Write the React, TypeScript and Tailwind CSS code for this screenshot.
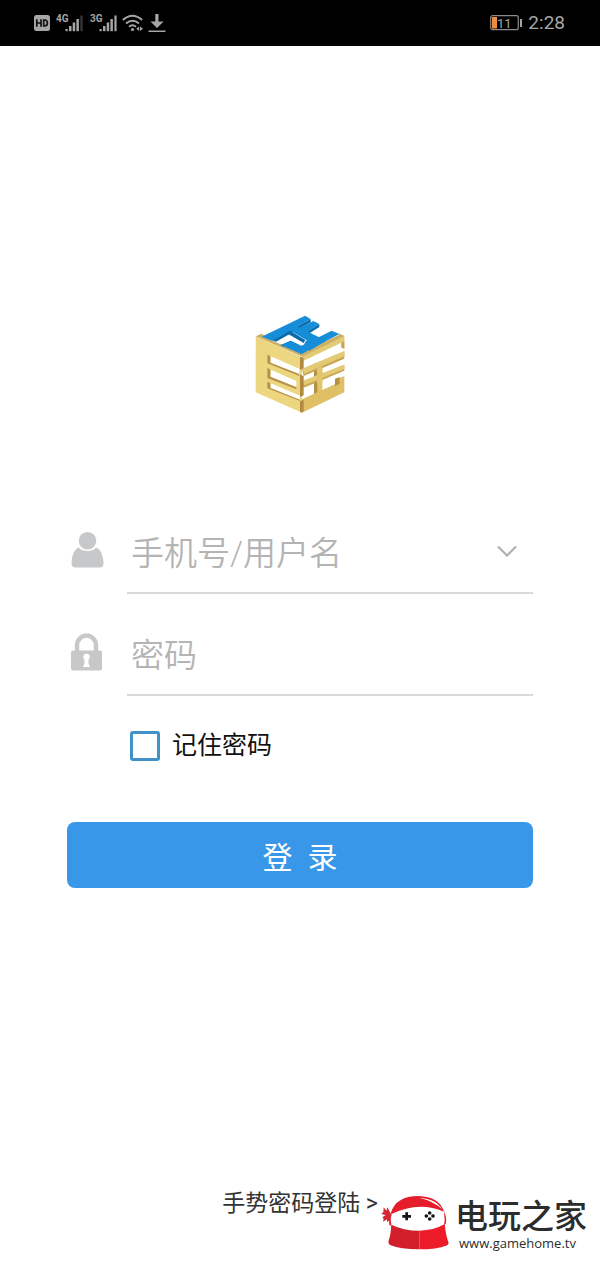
import { useState } from "react";
import type { ReactNode } from "react";

function SignalIcon({ label, dimLast }: { label: string; dimLast?: boolean }) {
  return (
    <svg className="h-5 w-7" viewBox="0 0 28 20" fill="#a6a6a6" aria-label={`${label} signal`}>
      <text x="0" y="9" fontSize="10" fontWeight="700" fontFamily="Roboto, sans-serif">
        {label}
      </text>
      <rect x="9.5" y="16" width="2.2" height="2.2" />
      <rect x="13" y="13" width="2.5" height="5.2" />
      <rect x="16.7" y="9.5" width="2.5" height="8.7" />
      <rect x="20.4" y="6" width="2.5" height="12.2" />
      <rect x="24.4" y="2.5" width="2.2" height="15.7" fill={dimLast ? "#3a3a3a" : "#a6a6a6"} />
    </svg>
  );
}

function StatusBar() {
  return (
    <header className="flex h-[46px] items-center justify-between bg-black pr-[35px] pl-[34px] text-[#a6a6a6]">
      <div className="flex items-center">
        <svg className="mr-[6px] h-4 w-4" viewBox="0 0 16 16" aria-label="HD">
          <rect width="16" height="16" rx="2.5" fill="#a6a6a6" />
          <path d="M2.8 4.200v7.600M7 4.200v7.600M2.800 8H7M9.700 5v6h1q2.700 0 2.700-3t-2.700-3z" fill="none" stroke="#111" strokeWidth="1.700" />
        </svg>
        <SignalIcon label="4G" dimLast />
        <span className="w-[6px]" />
        <SignalIcon label="3G" />
        <svg className="ml-1 h-5 w-[22px]" viewBox="0 0 22 20" fill="none" stroke="#a6a6a6" strokeWidth="1.9" aria-label="Wi-Fi">
          <path d="M.8 7Q10.500-1.500 20.200 7M4 10.500q6.500-5.500 13 0M7 13.800q3.500-3 7 0" />
          <circle cx="10.500" cy="16.500" r="1.600" fill="#a6a6a6" stroke="none" />
          <path d="M14.200 15.800l3-2.300v4.600zM18 13.500l3 2.300-3 2.300z" fill="#a6a6a6" stroke="none" />
        </svg>
        <svg className="ml-1 h-5 w-[18px]" viewBox="0 0 18 20" fill="#a6a6a6" aria-label="Download">
          <path d="M7.300 1h3.200v7.500h5L9 15 2.500 8.500h4.800zM.5 17.500h17V19H.5z" />
        </svg>
      </div>
      <div className="flex items-center gap-[6px]">
        <svg className="h-4 w-8" viewBox="0 0 32 16" aria-label="Battery 11%">
          <rect x=".7" y=".7" width="27.600" height="14" rx="2" fill="none" stroke="#8a8a8a" strokeWidth="1.200" />
          <rect x="2" y="2" width="5" height="11.500" fill="#ed8b3f" />
          <rect x="30" y="4" width="2" height="8" fill="#a6a6a6" />
          <text x="7" y="12.500" fontSize="13" fill="#a6a6a6" fontFamily="Roboto, sans-serif">11</text>
        </svg>
        <time className="text-[19px] leading-6">2:28</time>
      </div>
    </header>
  );
}

function CubeLogo() {
  return (
    <svg className="h-[125px] w-[130px]" viewBox="0 0 390 375" aria-label="Logo">
      {/* left face with three openings */}
      <path d="M62 109L201 172V338L62 277z" fill="#ecd780" />
      <path d="M97 164l10 5v18l86 34v7l-96-38zM97 204l10 5v20l77 31v8l-87-34zM97 245l10 5v12l88 34v7l-98-38z" fill="#b9924a" />
      <path d="M107 169l86 37v16l-86-34zM107 209l77 34v18l-77-31zM107 250l88 37v12l-88-35z" fill="#fff" />
      {/* right face strokes */}
      <path d="M246 190l16-6v112l-16 6z" fill="#e2c56c" />
      <path d="M237 190l10 2v100l-10 5z" fill="#b58f43" />
      <path d="M201 166l127-60v41l-9-5v-14l-113 54z" fill="#e3ca75" />
      <path d="M201 208l127-54v22l-122 52z" fill="#c9a553" />
      <path d="M201 206l127-53v16l-120 52z" fill="#e3ca75" />
      <path d="M201 245l127-51v18l-122 51z" fill="#c9a553" />
      <path d="M201 243l127-49v13l-120 49z" fill="#e3ca75" />
      <path d="M246 205l16-6v50l-16 6z" fill="#e2c56c" />
      <path d="M201 298l100-46 12-3v-14l15-7v49l-127 61z" fill="#dfc067" />
      <path d="M300 236l14-5v20l-14 7z" fill="#b58f43" />
      <path d="M319 128l9-4v23l-9-5z" fill="#c9a553" />
      {/* front corner */}
      <path d="M195 170l11 3v32l-11 5zM195 224l11 4v58l-11 5zM195 304l11-5v35l-6 4-5-3z" fill="#b28a3f" />
      {/* top face rim */}
      <path d="M62 109l17-8 122 59 114-59 13 7-127 62z" fill="#cdb068" />
      {/* top face character */}
      <g transform="translate(45 30)">
        <path d="M38 80L165 22l103 52-113 54z" fill="#fff" />
        <g fill="#0b6cab">
          <path d="M66 91L182 27v10L78 95z" />
          <path d="M106 54l60 36-5 9-57-33z" />
          <path d="M160 71l48-29v9l-38 24z" />
          <path d="M92 105l30-13 28 14-12 3-16-8-22 9z" />
        </g>
        <g fill="#168dd8">
          <path d="M35 80L165 17l17 10L66 92z" />
          <path d="M108 55l24-11 92 46-24 18z" />
          <path d="M136 60l54-27 18 9-46 29z" />
          <path d="M130 120l115-58 23 10-113 60z" />
          <path d="M92 106l30-13 26 12 32 10-25 17z" />
          <path d="M168 92l30-12 30 12-50 30-20-12z" />
        </g>
      </g>
    </svg>
  );
}

function UserIcon() {
  return (
    <svg className="h-9 w-[33px]" viewBox="0 0 33 36" fill="#c7c8ca" aria-hidden="true">
      <path d="M7.500 15.500Q1 19 .5 31q0 4.500 4 4.500h24q4 0 4-4.500Q32 19 25.500 15.500q-3.500 3.500-9 3.500t-9-3.500z" />
      <circle cx="16.500" cy="8.800" r="8.800" />
    </svg>
  );
}

function LockIcon() {
  return (
    <svg className="h-[38px] w-[31px]" viewBox="0 0 31 38" aria-hidden="true">
      <path d="M6 19v-6.500a9.500 10 0 0 1 19 0V19" fill="none" stroke="#c7c8ca" strokeWidth="4.400" />
      <rect y="17.500" width="31" height="20" rx="2" fill="#c7c8ca" />
      <path d="M15.500 20.500a3.500 3.500 0 0 1 2 6.300q-.8 3 1.500 7.200h-7q2.300-4.200 1.500-7.200a3.500 3.500 0 0 1 2-6.300z" fill="#fff" />
    </svg>
  );
}

function Field({ id, label, type, icon, action }: { id: string; label: string; type: string; icon: ReactNode; action?: ReactNode }) {
  return (
    <div className="flex">
      <label htmlFor={id} aria-label={label} className="flex w-[60px] shrink-0 items-center pt-1 pl-1">
        {icon}
      </label>
      <div className="flex min-w-0 flex-1 items-center border-b-2 border-[#dadada] pt-2">
        <input
          id={id}
          type={type}
          placeholder={label}
          className="h-[82px] min-w-0 flex-1 bg-transparent pt-1 pl-1 text-[33px] font-[350] outline-none placeholder:text-[#b4b4b4]"
        />
        {action}
      </div>
    </div>
  );
}

function Watermark() {
  return (
    <div className="absolute right-[13px] bottom-[12px] flex items-center">
      <svg className="h-[65px] w-[70px]" viewBox="0 0 210 195" aria-hidden="true">
        <path d="M30 69Q46 19 119 18q64 2 78 47l2 44q-76 40-161-1z" fill="#fff" />
        <path d="M36 68Q51 18 119 18q62 2 76 47-77-33-159 8z" fill="#e51c2a" />
        <path d="M121 23q52 4 67 34-23-23-67-34z" fill="#fff" />
        <path d="M37 70q-10 20-5 37l5-1-2-20zM195 64q10 22 5 38l-5 2 2-14z" fill="#e51c2a" />
        <path d="M38 76L25 52l-3 10-8-10-1 14-6 6 13 3-10 7 4 4-2 9 12-7v8l8-5z" fill="#d52634" />
        <path d="M37 104q36 18 84 18v56q-58 0-86-12-9-4-6-15 6-15 8-47z" fill="#d1202c" />
        <path d="M121 122q45-1 76-20 4 36 11 54 3 8-7 11-26 11-80 11z" fill="#ed1c2a" />
        <path d="M79 67h8v8h9v8h-9v8h-8v-8h-9v-8h9z" fill="#151515" />
        <g fill="#151515">
          <circle cx="152" cy="69" r="5.500" />
          <circle cx="142" cy="78" r="5.500" />
          <circle cx="162" cy="78" r="5.500" />
          <circle cx="152" cy="87" r="5.500" />
        </g>
      </svg>
      <div className="pt-1 pl-[6px] text-[#2c2c2c]">
        <p className="text-[33px] leading-9 font-medium">电玩之家</p>
        <p className="pl-1 font-['Open_Sans','Noto_Sans',sans-serif] text-[13px] leading-4">www.gamehome.tv</p>
      </div>
    </div>
  );
}

export default function App() {
  const [remember, setRemember] = useState(false);
  return (
    <div className="relative flex min-h-screen flex-col bg-white font-[Roboto,'Noto_Sans_CJK_SC',sans-serif]">
      <StatusBar />
      <main className="flex flex-1 flex-col px-[67px] pt-[254px]">
        <div className="flex justify-center">
          <CubeLogo />
        </div>
        <form className="mt-[77px]" onSubmit={(event) => event.preventDefault()}>
          <Field
            id="account"
            label="手机号/用户名"
            type="text"
            icon={<UserIcon />}
            action={
              <button type="button" aria-label="选择账号" className="mr-4 flex h-10 w-5 items-center justify-center">
                <svg className="h-3 w-5" viewBox="0 0 20 12" fill="none" stroke="#b0b0b0" strokeWidth="2.200">
                  <path d="M1 1.500l9 9 9-9" />
                </svg>
              </button>
            }
          />
          <div className="mt-[10px]">
            <Field id="password" label="密码" type="password" icon={<LockIcon />} />
          </div>
          <label className="mt-8 ml-[63px] flex w-fit items-center gap-3 text-[25px] leading-9 text-[#111]">
            <input
              type="checkbox"
              checked={remember}
              onChange={(event) => setRemember(event.target.checked)}
              className="size-[30px] appearance-none rounded-[3px] border-3 border-[#4192c8] bg-white checked:bg-[#4192c8]"
            />
            记住密码
          </label>
          <button type="submit" className="mt-[58px] h-[66px] w-full rounded-lg bg-[#3897e8] pt-1 text-[30px] whitespace-pre text-white">
            登{"  "}录
          </button>
        </form>
        <footer className="mt-auto pb-[45px] text-center">
          <a href="#gesture" className="text-[23px] leading-9 text-[#333]">
            手势密码登陆 &gt;
          </a>
        </footer>
      </main>
      <Watermark />
    </div>
  );
}
